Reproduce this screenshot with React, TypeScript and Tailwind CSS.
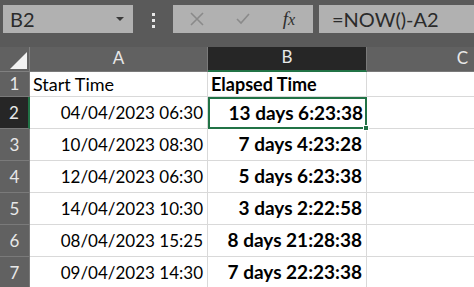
import React from "react";

const rows = [
  { n: 1, a: "Start Time", b: "Elapsed Time", head: true },
  { n: 2, a: "04/04/2023 06:30", b: "13 days 6:23:38" },
  { n: 3, a: "10/04/2023 08:30", b: "7 days 4:23:28" },
  { n: 4, a: "12/04/2023 06:30", b: "5 days 6:23:38" },
  { n: 5, a: "14/04/2023 10:30", b: "3 days 2:22:58" },
  { n: 6, a: "08/04/2023 15:25", b: "8 days 21:28:38" },
  { n: 7, a: "09/04/2023 14:30", b: "7 days 22:23:38" },
];

function FormulaBar() {
  return (
    <div className="flex h-[47px] items-start gap-0 bg-[#5a5a5a] pt-[5px] pl-[3px]">
      {/* name box */}
      <div className="flex h-[28px] w-[130px] items-center justify-between bg-[#b1b1b1] pl-[7px] pr-[9px] text-[20px] text-[#2b2b2b]">
        <span>B2</span>
        <svg width="8" height="5" viewBox="0 0 8 5">
          <path d="M0 0 L8 0 L4 4 Z" fill="#3a3a3a" />
        </svg>
      </div>
      {/* dots */}
      <div className="flex w-[40px] flex-col items-center gap-[3px] pt-[8px]">
        <span className="size-[3px] bg-[#e8e8e8]" />
        <span className="size-[3px] bg-[#e8e8e8]" />
        <span className="size-[3px] bg-[#e8e8e8]" />
      </div>
      {/* buttons */}
      <div className="flex h-[28px] w-[140px] items-center bg-[#b1b1b1]">
        <div className="flex w-[48px] justify-center">
          <svg width="14" height="14" viewBox="0 0 14 14">
            <path d="M1 1 L13 13 M13 1 L1 13" stroke="#8a8a8a" strokeWidth="1.6" />
          </svg>
        </div>
        <div className="flex w-[44px] justify-center">
          <svg width="14" height="12" viewBox="0 0 14 12">
            <path d="M1 6 L5 10 L13 1" stroke="#8a8a8a" strokeWidth="1.6" fill="none" />
          </svg>
        </div>
        <div className="flex w-[48px] justify-center font-['Liberation_Serif',serif] text-[19px] italic text-[#2e2e2e]">
          <span>f</span>
          <span className="text-[16px] pt-[3px]">x</span>
        </div>
      </div>
      <div className="ml-[6px] flex h-[28px] flex-1 items-center bg-[#b1b1b1] pl-[13px] text-[20px] text-[#2b2b2b]">
        =NOW()-A2
      </div>
    </div>
  );
}

export default function App() {
  return (
    <div className="h-[287px] w-[474px] overflow-hidden bg-white font-['Lato',sans-serif]">
      <FormulaBar />
      <div className="grid grid-cols-[30px_178px_159px_1fr] grid-rows-[25px_25px_repeat(6,32px)]">
        {/* header row */}
        <div className="relative border-r border-b border-[#808080] bg-[#616161]">
          <svg className="absolute right-[2px] bottom-[2px]" width="17" height="17" viewBox="0 0 17 17">
            <path d="M17 0 L17 17 L0 17 Z" fill="#f2f2f2" />
          </svg>
        </div>
        <div className="flex items-end justify-center border-r border-b border-[#7a7a7a] bg-[#616161] pb-[1px] text-[17px] text-[#e8e8e8]">
          A
        </div>
        <div className="flex items-end justify-center border-r border-[#7a7a7a] border-b-2 border-b-[#217346] bg-[#262626] pb-[1px] text-[17px] text-[#e8e8e8]">
          B
        </div>
        <div className="flex items-end justify-end border-b border-[#7a7a7a] bg-[#616161] pr-[6px] pb-[1px] text-[17px] text-[#e8e8e8]">
          C
        </div>

        {rows.map((r) => (
          <React.Fragment key={r.n}>
            <div
              className={
                r.n === 2
                  ? "flex items-center justify-center border-b border-[#7a7a7a] border-r-2 border-r-[#217346] bg-[#262626] text-[17px] text-[#e8e8e8]"
                  : "flex items-center justify-center border-r border-b border-[#7a7a7a] bg-[#616161] text-[17px] text-[#e8e8e8]"
              }
            >
              {r.n}
            </div>
            <div
              className={
                r.head
                  ? "flex items-center border-r border-b border-[#d9d9d9] pl-[3px] text-[18px] text-black"
                  : "flex items-center justify-end border-r border-b border-[#d9d9d9] pr-[4px] text-[17px] text-black"
              }
            >
              {r.a}
            </div>
            {r.n === 2 ? (
              <div className="relative flex items-center justify-end border-2 border-[#217346] pr-[2px] text-[19px] font-bold text-black">
                {r.b}
                <span className="absolute right-[-4px] bottom-[-4px] size-[6px] border border-white bg-[#217346]" />
              </div>
            ) : (
              <div
                className={
                  r.head
                    ? "flex items-center border-r border-b border-[#d9d9d9] pl-[3px] text-[18px] font-bold text-black"
                    : "flex items-center justify-end border-r border-b border-[#d9d9d9] pr-[4px] text-[19px] font-bold text-black"
                }
              >
                {r.b}
              </div>
            )}
            <div className="border-b border-[#d9d9d9]" />
          </React.Fragment>
        ))}
      </div>
    </div>
  );
}
